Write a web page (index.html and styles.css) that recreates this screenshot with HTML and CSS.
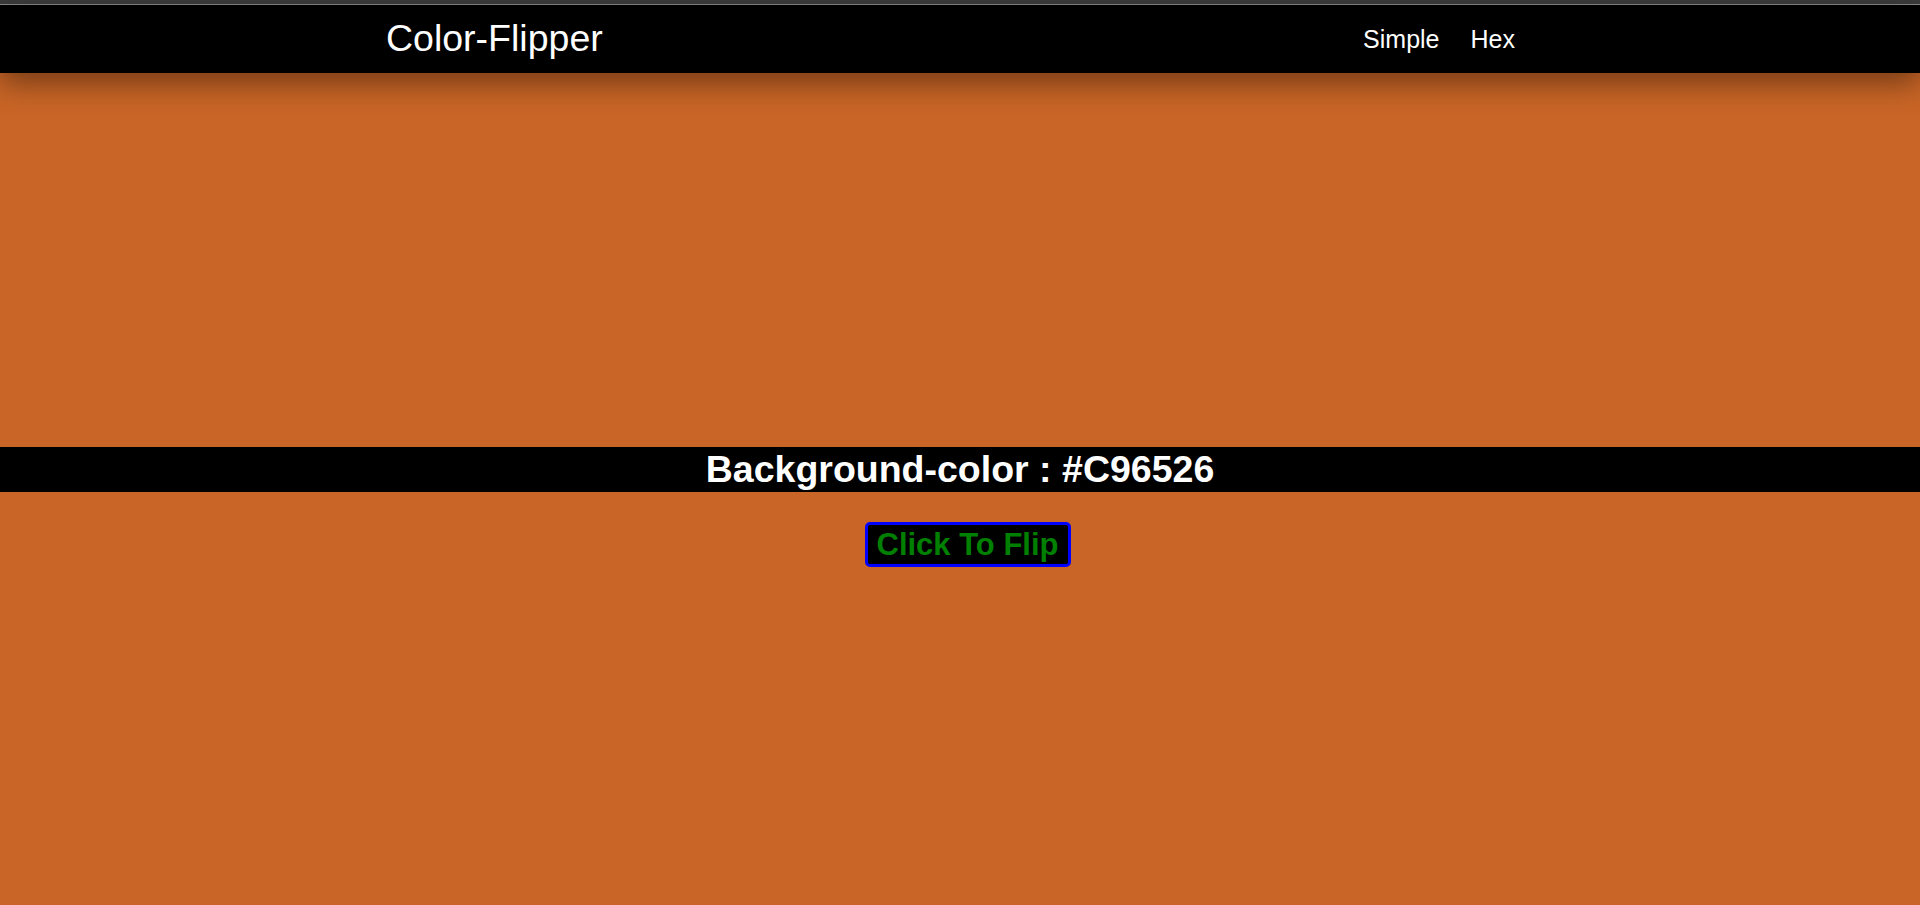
FILE: index.html
```html
<!DOCTYPE html>
<html lang="en">
<head>
<meta charset="utf-8">
<title>Color Flipper</title>
<link rel="stylesheet" href="styles.css">
</head>
<body>
<div class="chrome"></div>
<nav class="nav">
  <div class="nav-inner">
    <h4 class="brand">Color-Flipper</h4>
    <ul class="links">
      <li><a href="#" class="link">Simple</a></li>
      <li><a href="#" class="link">Hex</a></li>
    </ul>
  </div>
</nav>
<main class="main">
  <h2 class="band">Background-color : <span class="color">#C96526</span></h2>
  <button class="btn">Click To Flip</button>
</main>
</body>
</html>
```

FILE: styles.css
```css
* { box-sizing: border-box; }
html, body { margin: 0; padding: 0; }
body {
  background: #C96526;
  font-family: "Liberation Sans", Arial, sans-serif;
  min-height: 905px;
  overflow: hidden;
}
.chrome {
  height: 5px;
  background: #3c3c3c;
  border-bottom: 1px solid #8a8a8a;
}
.nav {
  background: #000;
  height: 68px;
  box-shadow: 0 10px 30px rgba(0, 0, 0, 0.42);
  position: relative;
  z-index: 1;
}
.nav-inner {
  height: 100%;
  padding: 0 384px 0 386px;
  display: flex;
  align-items: center;
  justify-content: space-between;
}
.brand {
  margin: 0;
  color: #fff;
  font-weight: 400;
  font-size: 37.5px;
  line-height: 1;
}
.links {
  list-style: none;
  margin: 0;
  padding: 0 21px 0 0;
  display: flex;
  gap: 31px;
}
.link {
  color: #fff;
  text-decoration: none;
  font-size: 25px;
  line-height: 1;
}
.main {
  padding-top: 374px;
  display: flex;
  flex-direction: column;
  align-items: center;
}
.band {
  margin: 0;
  width: 100%;
  background: #000;
  color: #fff;
  text-align: center;
  font-size: 37.5px;
  font-weight: 700;
  line-height: 45px;
}
.btn {
  margin: 30px 0 0 15px;
  background: #000;
  color: #008000;
  border: 3px solid #0000ff;
  border-radius: 5px;
  font-family: "Liberation Sans", Arial, sans-serif;
  font-weight: 700;
  font-size: 31px;
  line-height: 35px;
  padding: 2px 9px;
  cursor: pointer;
}
```
